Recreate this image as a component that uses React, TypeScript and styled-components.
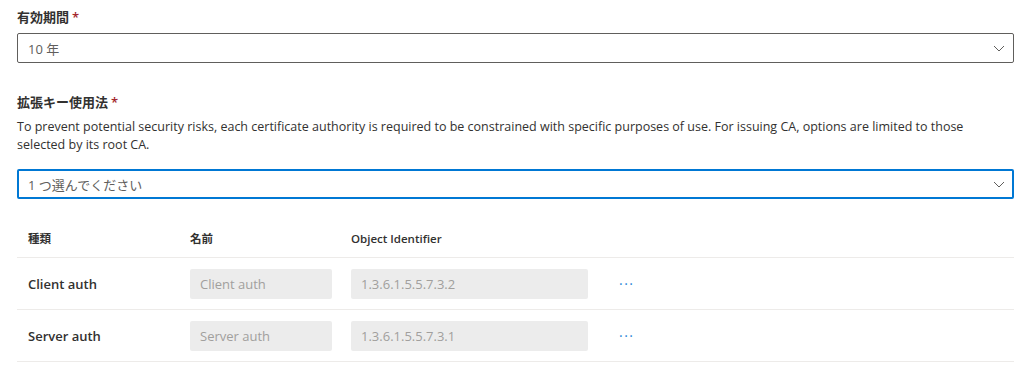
import React from 'react';
import styled, { createGlobalStyle } from 'styled-components';

const GlobalStyle = createGlobalStyle`
  body {
    margin: 0;
    background: #ffffff;
    font-family: "Open Sans", "Noto Sans CJK JP", sans-serif;
    color: #323130;
  }
`;

const Page = styled.div`
  padding: 8px 10px 0 17px;
  width: 1024px;
  box-sizing: border-box;
`;

const Field = styled.div<{ $gap?: number }>`
  display: flex;
  flex-direction: column;
  margin-bottom: ${(p) => p.$gap ?? 0}px;
`;

const Label = styled.div`
  font-size: 13px;
  font-weight: 600;
  line-height: 18px;
  padding: 0 0 7px;
  color: #323130;
`;

const Star = styled.span`
  color: #a4262c;
  margin-left: 3px;
`;

const Description = styled.div`
  font-size: 12.5px;
  line-height: 18px;
  color: #323130;
  margin: 0 0 15px;
  padding-right: 40px;
`;

const Select = styled.div<{ $focused?: boolean }>`
  display: flex;
  align-items: center;
  justify-content: space-between;
  height: 30px;
  box-sizing: border-box;
  border: ${(p) => (p.$focused ? '2px solid #0078d4' : '1px solid #605e5c')};
  border-radius: 2px;
  padding: ${(p) => (p.$focused ? '0 7px 0 9px' : '0 8px 0 10px')};
  font-size: 13px;
  color: #605e5c;
`;

const Chevron = () => (
  <svg width="12" height="12" viewBox="0 0 12 12" fill="none">
    <path d="M1 4l5 5 5-5" stroke="#605e5c" strokeWidth="1" />
  </svg>
);

const Table = styled.div`
  margin-top: 20px;
  display: flex;
  flex-direction: column;
`;

const Row = styled.div<{ $header?: boolean }>`
  display: grid;
  grid-template-columns: 162px 161px 266px 40px;
  align-items: center;
  height: ${(p) => (p.$header ? 38 : 51)}px;
  padding-left: 11px;
  border-bottom: 1px solid #edebe9;
`;

const HeadCell = styled.div`
  font-size: 11.5px;
  font-weight: 600;
  color: #323130;
`;

const TypeCell = styled.div`
  font-size: 13px;
  font-weight: 600;
  color: #323130;
`;

const ReadOnlyBox = styled.div<{ $w: number }>`
  width: ${(p) => p.$w}px;
  height: 30px;
  box-sizing: border-box;
  background: #ececec;
  border-radius: 2px;
  padding: 0 10px;
  display: flex;
  align-items: center;
  font-size: 13px;
  color: #a19f9d;
`;

const More = styled.div`
  color: #2b88d8;
  font-size: 14px;
  letter-spacing: 1.5px;
  padding-left: 2px;
  line-height: 1;
`;

const rows = [
  { type: 'Client auth', oid: '1.3.6.1.5.5.7.3.2' },
  { type: 'Server auth', oid: '1.3.6.1.5.5.7.3.1' },
];

const App: React.FC = () => {
  return (
    <>
      <GlobalStyle />
      <Page>
        <Field $gap={30}>
          <Label>
            有効期間<Star>*</Star>
          </Label>
          <Select>
            <span>10 年</span>
            <Chevron />
          </Select>
        </Field>
        <Field>
          <Label>
            拡張キー使用法<Star>*</Star>
          </Label>
          <Description>
            To prevent potential security risks, each certificate authority is required to be constrained with specific
            purposes of use. For issuing CA, options are limited to those selected by its root CA.
          </Description>
          <Select $focused>
            <span>1 つ選んでください</span>
            <Chevron />
          </Select>
        </Field>
        <Table>
          <Row $header>
            <HeadCell>種類</HeadCell>
            <HeadCell>名前</HeadCell>
            <HeadCell>Object Identifier</HeadCell>
            <span />
          </Row>
          {rows.map((r) => (
            <Row key={r.oid}>
              <TypeCell>{r.type}</TypeCell>
              <ReadOnlyBox $w={142}>{r.type}</ReadOnlyBox>
              <ReadOnlyBox $w={237}>{r.oid}</ReadOnlyBox>
              <More>···</More>
            </Row>
          ))}
        </Table>
      </Page>
    </>
  );
};

export default App;
